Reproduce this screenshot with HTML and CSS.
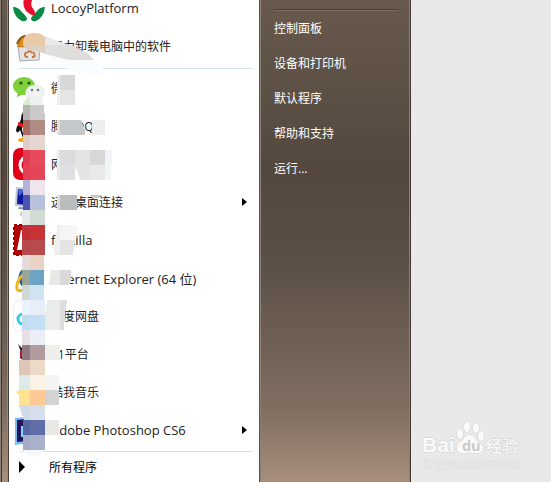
FILE: index.html
```html
<!DOCTYPE html>
<html lang="zh-CN">
<head>
    <meta charset="UTF-8">
    <meta name="viewport" content="width=device-width, initial-scale=1.0">
    <title>开始菜单</title>
    <link rel="stylesheet" href="styles.css">
</head>
<body>
    <div class="desktop">
        <div class="start-menu">
            <div class="programs">
                <ul class="program-list pinned">
                    <li><a class="program english" href="#">
                        <svg class="icon" viewBox="0 0 32 32">
                            <path d="M0 15 Q5 15 8 19 Q12 23 14 26 Q14 30 9 29 Q1 25 0 15Z" fill="#0b8a43"/>
                            <path d="M32 15 Q27 15 24 19 Q20 23 18 26 Q18 30 23 29 Q31 25 32 15Z" fill="#0b8a43"/>
                            <path d="M14 0 Q9 8 11 15 Q13 21 21 24 Q23 21 21 18 Q16 14 20 6Z" fill="#e60f2d"/>
                        </svg>
                        <span>LocoyPlatform</span>
                    </a></li>
                    <li><a class="program" href="#">
                        <svg class="icon" viewBox="0 0 32 32">
                            <path d="M5 17 L27 17 L26 30 L7 31Z" fill="#e2e2e4" stroke="#aaa"/>
                            <path d="M4 17 Q4 6 13 5 Q20 6 21 17Z" fill="#d88b1c"/>
                            <path d="M4 14 Q8 4 15 7" fill="none" stroke="#8d5110" stroke-width="2"/>
                            <path d="M13 22 Q10 27 15 27 M19 27 Q24 27 20 22 M14 23 Q17 19 19 23" fill="none" stroke="#c9743a" stroke-width="2"/>
                        </svg>
                        <span>强力卸载电脑中的软件</span>
                    </a></li>
                </ul>
                <hr class="divider">
                <ul class="program-list">
                    <li><a class="program" href="#">
                        <svg class="icon" viewBox="0 0 32 32">
                            <path d="M5 20 L4 25 L10 22Z" fill="#6fc72f"/>
                            <ellipse cx="11" cy="14" rx="11" ry="9" fill="#7dd038"/>
                            <circle cx="8" cy="11" r="1.6" fill="#28541a"/>
                            <circle cx="16" cy="11" r="1.6" fill="#28541a"/>
                            <ellipse cx="22" cy="21" rx="9.500" ry="8" fill="#f1f3f3" stroke="#d8dddb" stroke-width=".5"/>
                            <circle cx="19" cy="18" r="1.300" fill="#777"/>
                            <circle cx="25" cy="18" r="1.300" fill="#777"/>
                        </svg>
                        <span>微信</span>
                    </a></li>
                    <li><a class="program" href="#">
                        <svg class="icon" viewBox="0 0 32 32">
                            <path d="M8 9 Q8 0 16 0 Q23 0 24 9 L28 20 Q28 24 25 22 L22 28 L10 28 L7 20 Q4 25 3 20 Q4 15 7 12Z" fill="#111"/>
                            <ellipse cx="16" cy="19" rx="7" ry="8" fill="#fff"/>
                            <path d="M5 12 Q16 17 26 12 L26 16 Q16 20 5 16Z" fill="#e51a1a"/>
                            <ellipse cx="10" cy="30" rx="5" ry="2" fill="#f4a815"/>
                            <ellipse cx="22" cy="30" rx="5" ry="2" fill="#f4a815"/>
                        </svg>
                        <span>腾讯QQ</span>
                    </a></li>
                    <li><a class="program" href="#">
                        <svg class="icon" viewBox="0 0 32 32">
                            <rect width="32" height="32" rx="7" fill="#e1001a"/>
                            <circle cx="16" cy="17" r="9" fill="none" stroke="#fff" stroke-width="3"/>
                            <circle cx="17" cy="17" r="3" fill="none" stroke="#fff" stroke-width="2"/>
                        </svg>
                        <span>网易云音乐</span>
                    </a></li>
                    <li><a class="program" href="#">
                        <svg class="icon" viewBox="0 0 32 32">
                            <path d="M3 1 L22 3 L22 22 L2 20Z" fill="#bfc6d5"/>
                            <path d="M5 3 L20 5 L20 20 L4 18Z" fill="#0f1aa0"/>
                            <path d="M5 3 L12 4 L6 10Z" fill="#4564df"/>
                            <path d="M6 21 L20 22 L22 24 L5 23Z" fill="#8b919c"/>
                            <ellipse cx="11" cy="28" rx="4" ry="3" fill="#c9cacc"/>
                        </svg>
                        <span>远程桌面连接</span>
                        <i class="arrow"></i>
                    </a></li>
                    <li><a class="program english" href="#">
                        <svg class="icon" viewBox="0 0 32 32">
                            <rect x="1" y="1" width="30" height="30" fill="#b00505"/>
                            <rect x="1" y="1" width="30" height="30" fill="none" stroke="#a80000" stroke-width="2" stroke-dasharray="3 2"/>
                            <path d="M8 6 L25 6 L25 10 L13 10 L12 15 L21 15 L20 19 L11 19 L9 26 L4 26Z" fill="#fff"/>
                        </svg>
                        <span>filezilla</span>
                    </a></li>
                    <li><a class="program english" href="#">
                        <svg class="icon" viewBox="0 0 32 32">
                            <circle cx="17" cy="16" r="9" fill="none" stroke="#1d5a9e" stroke-width="5"/>
                            <path d="M9 16 L27 16" stroke="#2c79bb" stroke-width="4"/>
                            <path d="M31 4 Q26 0 16 7 Q2 18 4 27 Q6 31 13 26" fill="none" stroke="#efb71d" stroke-width="3"/>
                        </svg>
                        <span>Internet Explorer (64 位)</span>
                    </a></li>
                    <li><a class="program" href="#">
                        <svg class="icon" viewBox="0 0 32 32">
                            <rect x=".5" y=".5" width="31" height="31" rx="6" fill="#fff" stroke="#eee"/>
                            <circle cx="10" cy="19" r="5" fill="none" stroke="#38c5f2" stroke-width="3"/>
                            <circle cx="22" cy="19" r="5" fill="none" stroke="#3b8bea" stroke-width="3"/>
                        </svg>
                        <span>百度网盘</span>
                    </a></li>
                    <li><a class="program" href="#">
                        <svg class="icon" viewBox="0 0 32 32">
                            <path d="M5 6 L10 11 L10 22 L7 20 L8 14Z" fill="#241713"/>
                            <path d="M7 13 L12 9 L12 22 L7 19Z" fill="#b5161f"/>
                        </svg>
                        <span>51平台</span>
                    </a></li>
                    <li><a class="program" href="#">
                        <svg class="icon" viewBox="0 0 32 32">
                            <path d="M3 16 L12 12 L17 4 L21 12 L29 14 L23 20 L24 29 L16 25 L8 28 L8 20Z" fill="#ffe34f"/>
                        </svg>
                        <span>酷我音乐</span>
                    </a></li>
                    <li><a class="program" href="#">
                        <svg class="icon" viewBox="0 0 32 32">
                            <path d="M2 4 L24 2 L24 28 L2 31Z" fill="#7cb9f5"/>
                            <path d="M4 6 L24 4 L24 26 L4 28Z" fill="#21185c"/>
                            <path d="M9 12 L9 23" stroke="#8ccfff" stroke-width="2"/>
                        </svg>
                        <span class="english">Adobe Photoshop CS6</span>
                        <i class="arrow"></i>
                    </a></li>
                </ul>
                <hr class="divider">
                <button class="all-programs" type="button"><i class="arrow large"></i>所有程序</button>

                <!-- mosaic brushed over the icons and names -->
                <svg class="mosaic" viewBox="0 0 120 460" shape-rendering="crispEdges">
                    <g shape-rendering="auto">
                        <path d="M36 54 L60 59 L84 60 Q93 62 96 75 Q78 75 59 69 L45 60Z" fill="#fbfcfe"/>
                        <path d="M36 36 L46 40 L64 46 L36 46Z" fill="#e9e9e9"/>
                        <path d="M36 45 L62 45 L78 53 L85 60 L60 60 L36 54Z" fill="#dfdedd"/>
                        <path d="M14 45 Q13 33 25 33 Q33 33 36 37 L36 45Z" fill="#e8caa6"/>
                        <path d="M14 45 L36 45 L36 54 L31 52 L18 50Z" fill="#dccfc5"/>
                        <path d="M14 105 Q15 99 22 97 L31 97 Q35 99 34 105Z" fill="#edf1ef"/>
                        <path d="M14 105 Q15 99 21 97 L21 105Z" fill="#d9efcb"/>
                    </g>
                    <path d="M14 105h7v15h-7z" fill="#b5b5b5"/><path d="M21 105h14l1 15h-15z" fill="#c9c9c9"/>
                    <path d="M14 120h7v15h-7z" fill="#a96b5f"/><path d="M21 120h15v15h-15z" fill="#b08d84"/>
                    <path d="M14 135h7v15h-7z" fill="#dfcdc5"/><path d="M21 135h15v15h-15z" fill="#e4d6d0"/>
                    <path d="M14 150h7v15h-7z" fill="#e13b53"/><path d="M21 150h15v15h-15z" fill="#e64b5c"/>
                    <path d="M14 165h7v15h-7z" fill="#e54156"/><path d="M21 165h15v15h-15z" fill="#e64557"/>
                    <path d="M14 180h7v15h-7z" fill="#b6b1dc"/><path d="M21 180h15v15h-15z" fill="#efe5ed"/>
                    <path d="M14 195h7v15h-7z" fill="#4b55b1"/><path d="M21 195h15v15h-15z" fill="#b8c1dc"/>
                    <path d="M13 210h8v15h-8z" fill="#e7ebe8"/><path d="M21 210h15v15h-15z" fill="#d2dad4"/>
                    <path d="M13 225h8v15h-8z" fill="#c03036"/><path d="M21 225h15v15h-15z" fill="#c83337"/>
                    <path d="M13 240h8v15h-8z" fill="#b5494d"/><path d="M21 240h15v15h-15z" fill="#b84b4e"/>
                    <path d="M13 255h8v15h-8z" fill="#e7dade"/><path d="M21 255h14v15h-14z" fill="#e8d3c6"/>
                    <path d="M13 270h8v15h-8z" fill="#99a693"/><path d="M21 270h14v15h-14z" fill="#6ea3c4"/>
                    <path d="M13 285h8v15h-8z" fill="#d0dad4"/><path d="M21 285h14v15h-14z" fill="#cee4f3"/>
                    <path d="M13 300h8v15h-8z" fill="#e8f3fa"/><path d="M21 300h15v15h-15z" fill="#e8eef7"/>
                    <path d="M13 315h8v15h-8z" fill="#bfdcf0"/><path d="M21 315h15v15h-15z" fill="#c2dff4"/>
                    <path d="M13 330h8v15h-8z" fill="#e6dfe5"/><path d="M21 330h15v15h-15z" fill="#ebeef5"/>
                    <path d="M13 345h8v15h-8z" fill="#907b85"/><path d="M21 345h15v15h-15z" fill="#b09c9c"/>
                    <path d="M10 360h11v15h-11z" fill="#dfc5b6"/><path d="M21 360h15v15h-15z" fill="#ecdac7"/>
                    <path d="M10 375h11v15h-11z" fill="#dceaea"/><path d="M21 375h15v15h-15z" fill="#fbf3e6"/>
                    <path d="M10 390h11v15h-11z" fill="#ffe391"/><path d="M21 390h15v15h-15z" fill="#fdca96"/>
                    <path d="M10 405h11v15h-6z" fill="#d2dbe9"/><path d="M21 405h15v15h-15z" fill="#d8dfec"/>
                    <path d="M14 420h7v15h-7z" fill="#5865a5"/><path d="M21 420h15v15h-15z" fill="#5f6da9"/>
                    <path d="M14 435h7v15h-7z" fill="#a4abc6"/><path d="M21 435h15v15h-15z" fill="#a8b0ca"/>
                    <path d="M14 450h22l-7 6h-10z" fill="#f6f7fa"/>

                    <path d="M48 75h3v30h-3z" fill="#eee"/><path d="M51 75h15v15h-15z" fill="#d7d8da"/><path d="M51 90h15v15h-15z" fill="#e5e5e6"/>
                    <path d="M48 120h3v15h-3z" fill="#dedfe0"/><path d="M51 120h21l4 10v5h-25z" fill="#c6c7c8"/><path d="M83 120h13v15h-13z" fill="#ecedef"/>
                    <path d="M48 150h3v30h-3z" fill="#e9e9ea"/><path d="M51 150h15v15h-15z" fill="#d9dbdd"/><path d="M51 165h15v15h-15z" fill="#dfe0e2"/>
                    <path d="M66 150h15v30h-9l-6-13z" fill="#e4e4e2"/><path d="M81 150h15v15h-15z" fill="#d8d8d8"/><path d="M81 165h15v15h-15z" fill="#e9e9e8"/><path d="M96 150h7l-1 30h-6z" fill="#f2f4f7"/>
                    <path d="M48 195h3v15h-3z" fill="#dcdcdc"/><path d="M51 195h17v15h-17z" fill="#bbbcbd"/><path d="M80 195h14l-5 3h-5z" fill="#c8c8c8"/>
                    <path d="M48 225h3v15h-4z" fill="#eee"/><path d="M51 225h17l-1 15h-16z" fill="#f5f5f5"/><path d="M46 240h5v15h-6z" fill="#efefef"/><path d="M51 240h15l-2 15h-13z" fill="#e4e4e3"/>
                    <path d="M42 270h9v15h-11z" fill="#e8e8e7"/><path d="M51 270h11v10l-2 5h-9z" fill="#d8d8d6"/>
                    <path d="M38 300h13v15h-15z" fill="#eaebeb"/><path d="M51 300h7l-2 15h-5z" fill="#dddedd"/><path d="M36 315h15v15h-15z" fill="#eaebea"/><path d="M51 315h5l-1 15h-4z" fill="#dadcda"/>
                    <path d="M36 345h15l1 15h-16z" fill="#eeeeec"/>
                    <path d="M36 375h14v15h-14z" fill="#f4f4f2"/><path d="M36 390h14v15h-14z" fill="#d3d3d2"/>
                    <path d="M36 420h14v15h-14z" fill="#e8e8e7"/>
                </svg>
            </div>
            <nav class="places">
                <a href="#">控制面板</a>
                <a href="#">设备和打印机</a>
                <a href="#">默认程序</a>
                <a href="#">帮助和支持</a>
                <a href="#">运行...</a>
            </nav>
        </div>
        <div class="wallpaper">
            <svg class="watermark" viewBox="0 0 104 52">
                <g class="mark">
                    <text class="latin" x="2" y="32">Bai</text>
                    <ellipse cx="40" cy="14" rx="3" ry="5"/>
                    <ellipse cx="47" cy="7" rx="3" ry="5"/>
                    <ellipse cx="56" cy="8" rx="3" ry="5"/>
                    <ellipse cx="61" cy="16" rx="3" ry="5"/>
                    <path d="M50 15 Q54 15 57 21 Q64 25 63 30 Q61 34 54 33 Q49 32 45 33 Q37 34 37 28 Q37 24 42 21 Q45 15 50 15Z"/>
                    <text class="cjk" x="66" y="32">经验</text>
                </g>
                <text class="du" x="42" y="31">du</text>
                <text class="url" x="4" y="48">jingyan.baidu.com</text>
            </svg>
        </div>
    </div>
</body>
</html>
```

FILE: styles.css
```css
* {
    box-sizing: border-box;
}

body {
    margin: 0;
    font-family: 'Open Sans', 'Noto Sans CJK SC', sans-serif;
    font-size: 12px;
    color: #222;
}

.desktop {
    display: flex;
    min-height: 100vh;
    overflow: hidden;
}

/* Start menu frame */
.start-menu {
    display: flex;
    padding-left: 8px;
    background: linear-gradient(to right, #8a8078 0 1px, #40362f 1px 2px, transparent 2px 7px, #93887e 7px 8px, transparent 8px),
        linear-gradient(#67594d, #54483e 35%, #5c5046 55%, #806e61 85%, #a88e7c);
}

.programs {
    position: relative;
    width: 252px;
    background: #fff;
    border-left: 1px solid #4c423a;
    border-right: 1px solid #5b5148;
}

.program-list {
    margin: 0;
    padding: 0;
    list-style: none;
}

.pinned {
    margin-top: -11px;
}

.program {
    display: flex;
    align-items: center;
    gap: 6px;
    height: 38px;
    padding: 0 12px 0 4px;
    color: #222;
    text-decoration: none;
    white-space: nowrap;
}

.english {
    font-size: 13px;
}

.icon {
    width: 32px;
    height: 32px;
    flex: none;
}

.divider {
    height: 1px;
    margin: 2px 7px 0 11px;
    border: 0;
    background: #d5e5f5;
}

.pinned + .divider {
    margin-top: 3px;
}

.arrow {
    width: 0;
    height: 0;
    margin-left: auto;
    border: 4px solid transparent;
    border-left: 5px solid #000;
    border-right: 0;
}

.arrow.large {
    margin: 0;
    border-width: 6px 0 6px 6px;
}

.all-programs {
    display: flex;
    align-items: center;
    gap: 24px;
    width: 100%;
    height: 30px;
    padding: 0 10px;
    border: 0;
    background: none;
    color: #000;
    font: inherit;
}

.mosaic {
    position: absolute;
    top: 0;
    left: 0;
    width: 120px;
    height: 460px;
    pointer-events: none;
}

/* Right column */
.places {
    display: flex;
    flex-direction: column;
    width: 151px;
    padding: 9px 13px 0 13px;
    border-left: 1px solid #8d8279;
    border-right: 1px solid #453b34;
    box-shadow: inset -1px 0 #8a7e74;
}

.places::before {
    content: "";
    height: 2px;
    margin-right: -1px;
    background: linear-gradient(#483d35 1px, #7b6e63 1px);
}

.places a {
    color: #fff;
    line-height: 35px;
    text-decoration: none;
}

/* Wallpaper */
.wallpaper {
    display: flex;
    flex: 1;
    align-items: flex-end;
    justify-content: flex-end;
    padding: 0 27px 10px 0;
    background: linear-gradient(135deg, #e5e5e5 37%, #ececec 37% 50%, #e5e5e5 50% 87%, #ececec 87%) 0 0 / 4px 4px;
}

.watermark {
    width: 104px;
    height: 52px;
}

.mark {
    fill: #fafafa;
    stroke: #d2d2d2;
    stroke-width: 1px;
    paint-order: stroke;
}

.latin {
    font: bold 21px 'Liberation Sans', sans-serif;
}

.cjk {
    font: 500 16px 'Noto Sans CJK SC', sans-serif;
}

.du {
    font: bold 15px 'Liberation Sans', sans-serif;
    fill: #c9c9c9;
}

.url {
    font: 12px 'Liberation Sans', sans-serif;
    fill: #ededed;
    stroke: #dadada;
    stroke-width: 1px;
    paint-order: stroke;
}
```
